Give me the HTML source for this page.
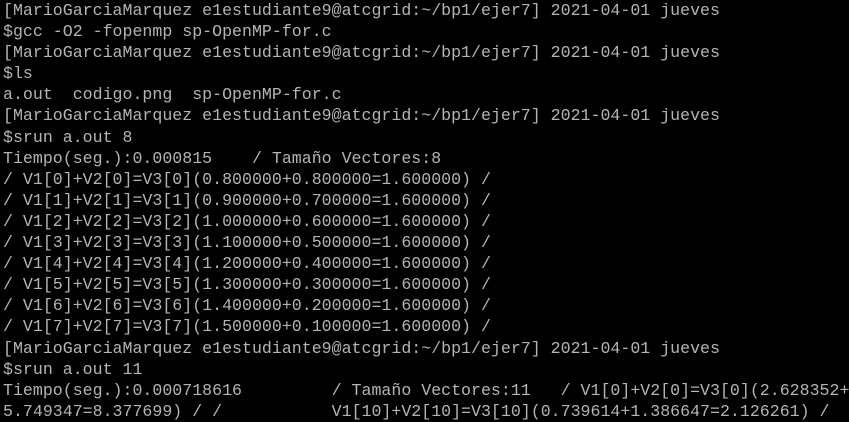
<!DOCTYPE html>
<html><head><meta charset="utf-8"><style>
html,body{margin:0;padding:0;background:#000;width:849px;height:422px;overflow:hidden}
pre{margin:0;position:absolute;left:3px;top:0px;font-family:"Liberation Mono",monospace;font-size:16.6px;line-height:21.1px;color:#b4b4b4;white-space:pre}
</style></head><body><pre>[MarioGarciaMarquez e1estudiante9@atcgrid:~/bp1/ejer7] 2021-04-01 jueves
$gcc -O2 -fopenmp sp-OpenMP-for.c
[MarioGarciaMarquez e1estudiante9@atcgrid:~/bp1/ejer7] 2021-04-01 jueves
$ls
a.out  codigo.png  sp-OpenMP-for.c
[MarioGarciaMarquez e1estudiante9@atcgrid:~/bp1/ejer7] 2021-04-01 jueves
$srun a.out 8
Tiempo(seg.):0.000815    / Tamaño Vectores:8
/ V1[0]+V2[0]=V3[0](0.800000+0.800000=1.600000) /
/ V1[1]+V2[1]=V3[1](0.900000+0.700000=1.600000) /
/ V1[2]+V2[2]=V3[2](1.000000+0.600000=1.600000) /
/ V1[3]+V2[3]=V3[3](1.100000+0.500000=1.600000) /
/ V1[4]+V2[4]=V3[4](1.200000+0.400000=1.600000) /
/ V1[5]+V2[5]=V3[5](1.300000+0.300000=1.600000) /
/ V1[6]+V2[6]=V3[6](1.400000+0.200000=1.600000) /
/ V1[7]+V2[7]=V3[7](1.500000+0.100000=1.600000) /
[MarioGarciaMarquez e1estudiante9@atcgrid:~/bp1/ejer7] 2021-04-01 jueves
$srun a.out 11
Tiempo(seg.):0.000718616         / Tamaño Vectores:11   / V1[0]+V2[0]=V3[0](2.628352+
5.749347=8.377699) / /           V1[10]+V2[10]=V3[10](0.739614+1.386647=2.126261) /</pre></body></html>
